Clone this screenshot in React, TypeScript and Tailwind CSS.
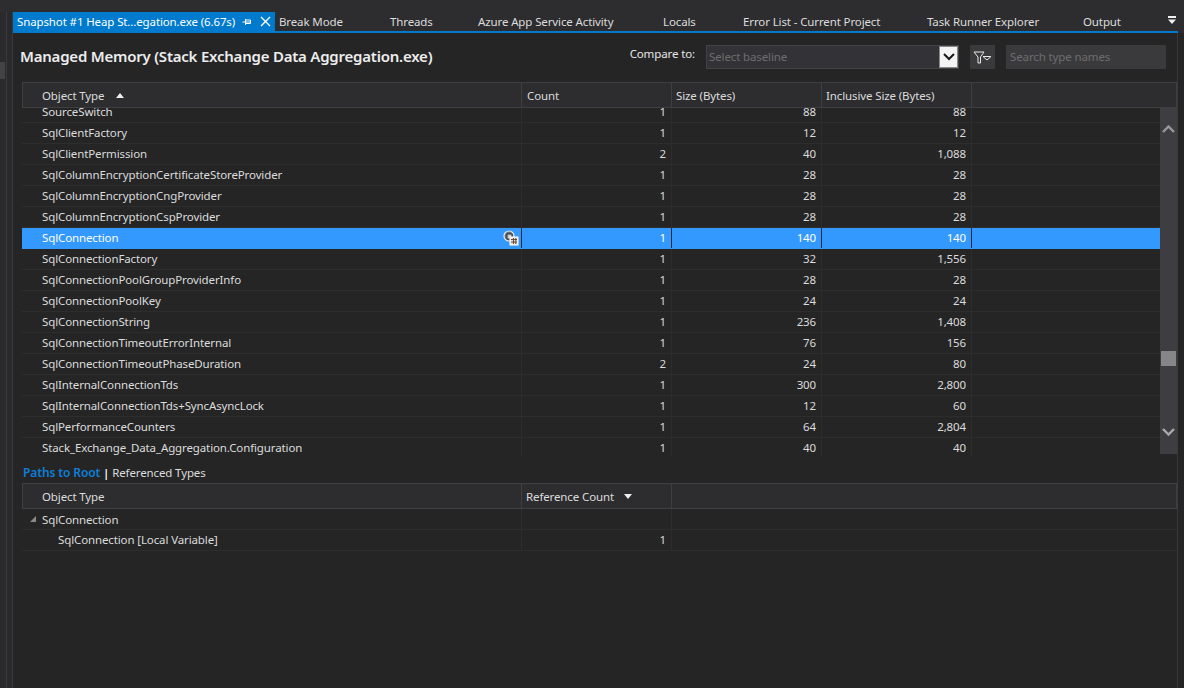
import React from "react";

const rows: [string, string, string, string][] = [
  ["SourceSwitch", "1", "88", "88"],
  ["SqlClientFactory", "1", "12", "12"],
  ["SqlClientPermission", "2", "40", "1,088"],
  ["SqlColumnEncryptionCertificateStoreProvider", "1", "28", "28"],
  ["SqlColumnEncryptionCngProvider", "1", "28", "28"],
  ["SqlColumnEncryptionCspProvider", "1", "28", "28"],
  ["SqlConnection", "1", "140", "140"],
  ["SqlConnectionFactory", "1", "32", "1,556"],
  ["SqlConnectionPoolGroupProviderInfo", "1", "28", "28"],
  ["SqlConnectionPoolKey", "1", "24", "24"],
  ["SqlConnectionString", "1", "236", "1,408"],
  ["SqlConnectionTimeoutErrorInternal", "1", "76", "156"],
  ["SqlConnectionTimeoutPhaseDuration", "2", "24", "80"],
  ["SqlInternalConnectionTds", "1", "300", "2,800"],
  ["SqlInternalConnectionTds+SyncAsyncLock", "1", "12", "60"],
  ["SqlPerformanceCounters", "1", "64", "2,804"],
  ["Stack_Exchange_Data_Aggregation.Configuration", "1", "40", "40"],
];

const tabs = [
  ["Break Mode", "w-[110px] pl-[4px]"],
  ["Threads", "w-[93px] pl-[5px]"],
  ["Azure App Service Activity", "w-[185px]"],
  ["Locals", "w-[80px]"],
  ["Error List - Current Project", "w-[184px]"],
  ["Task Runner Explorer", "w-[156px]"],
  ["Output", "w-[84px]"],
];

function ObjectIcon() {
  return (
    <svg width="16" height="16" viewBox="0 0 16 16" className="absolute right-[2px] top-[2px]">
      <circle cx="6" cy="6" r="5" fill="#5a6d80" stroke="#e8e8e8" strokeWidth="1.2" />
      <rect x="4" y="4" width="5" height="5" fill="#cfcfcf" stroke="#333" />
      <rect x="7" y="7" width="8" height="8" fill="#e6e2de" stroke="#fff" />
      <path d="M8 9.5h6M8 12h6M10.5 8v6M12.8 8v6" stroke="#6b4a3a" strokeWidth="1" />
    </svg>
  );
}

function Row({ row }: { row: [string, string, string, string] }) {
  const selected = row[0] === "SqlConnection";
  const line = selected ? "border-[#1f2a36]" : "border-[#2d2d2e]";
  return (
    <div
      className={`flex h-[21px] leading-[20px] border-b ${
        selected ? "bg-[#3399ff] text-white border-[#3399ff]" : "border-[#2d2d2e] text-[#dcdcdc]"
      }`}
    >
      <div className={`relative w-[500px] pl-[20px] border-r whitespace-nowrap ${line}`}>
        {row[0]}
        {selected && <ObjectIcon />}
      </div>
      <div className={`w-[150px] pr-[5px] text-right border-r ${line}`}>{row[1]}</div>
      <div className={`w-[150px] pr-[5px] text-right border-r ${line}`}>{row[2]}</div>
      <div className={`w-[150px] pr-[5px] text-right border-r ${line}`}>{row[3]}</div>
      <div className="flex-1" />
    </div>
  );
}

export default function App() {
  return (
    <div className="h-[688px] w-[1184px] overflow-hidden bg-[#252526] text-[11.5px] text-[#dcdcdc] font-['Noto_Sans',sans-serif] tracking-[-0.12px]">
      <div className="h-[12px] bg-[#2d2d30]" />
      <div className="flex h-[676px]">
        {/* left dock strip */}
        <div className="w-[13px] shrink-0 border-r border-[#3a3a3c] bg-[#2a2a2c]">
          <div className="h-full w-[7px] border-r border-[#3a3a3c] pt-[50px]">
            <div className="h-[17px] w-[5px] bg-[#434346]" />
          </div>
        </div>
        <div className="flex-1 min-w-0 flex flex-col">
          {/* tab well */}
          <div className="bg-[#2d2d30]">
            <div className="mr-[6px] flex h-[21px] border-b-2 border-[#007acc]">
              <div className="flex w-[262px] shrink-0 items-center bg-[#007acc] pl-[4px] text-white whitespace-nowrap">
                <span className="w-[225px]">Snapshot #1 Heap St...egation.exe (6.67s)</span>
                <svg width="10" height="10" viewBox="0 0 10 10">
                  <path d="M0.5 5h3M3.5 2v6M3.5 3h5v3.5h-5M3.5 5h5" stroke="#fff" fill="none" />
                </svg>
                <svg width="11" height="11" viewBox="0 0 11 11" className="ml-[8px]">
                  <path d="M1 1l9 9M10 1l-9 9" stroke="#fff" strokeWidth="1.4" />
                </svg>
              </div>
              {tabs.map(([t, w]) => (
                <div key={t} className={`${w} shrink-0 whitespace-nowrap leading-[20px]`}>
                  {t}
                </div>
              ))}
              <div className="flex items-start pt-[4px]">
                <svg width="10" height="9" viewBox="0 0 10 9">
                  <path d="M1 0h8v2H1zM1 3.5h8L5 8z" fill="#eee" />
                </svg>
              </div>
            </div>
          </div>
          <div className="flex-1 min-h-0 mr-[6px] border-r border-[#3a3a3c] flex flex-col pl-[9px]">
            {/* title row */}
            <div className="flex h-[49px] shrink-0 items-center pb-[1px]">
              <h1 className="ml-[-2px] mb-[1px] text-[15px] font-semibold text-[#ededed] tracking-[-0.22px] whitespace-nowrap">
                Managed Memory (Stack Exchange Data Aggregation.exe)
              </h1>
              <span className="ml-auto mr-[11px] mb-[6px] text-[#e6e6e6]">Compare to:</span>
              <div className="flex h-[24px] w-[253px] items-center justify-between bg-[#333337] border border-[#434346] pl-[2px] text-[#6d6d6d]">
                <span>Select baseline</span>
                <span className="flex h-[22px] w-[19px] items-center justify-center bg-[#f4f4f4] border border-[#888]">
                  <svg width="12" height="8" viewBox="0 0 12 8">
                    <path d="M1 1l5 5 5-5" stroke="#1a1a1a" strokeWidth="2" fill="none" />
                  </svg>
                </span>
              </div>
              <div className="ml-[11px] flex h-[24px] w-[25px] items-center justify-center bg-[#3a3a3d]">
                <svg width="20" height="13" viewBox="0 0 20 13">
                  <path d="M1 1h10L7.5 6v6H5V6zM10 5.5h8l-4 3.5z" stroke="#e8e8e8" fill="none" />
                </svg>
              </div>
              <div className="ml-[11px] mr-[11px] flex h-[24px] w-[160px] items-center bg-[#3a3a3d] pl-[4px] text-[#6d6d6d]">
                Search type names
              </div>
            </div>
            {/* main grid */}
            <div className="h-[374px] shrink-0 flex flex-col">
              <div className="flex h-[26px] shrink-0 leading-[25px] bg-[#2d2d30] border border-[#3f3f41]">
                <div className="flex w-[499px] items-center pl-[19px] border-r border-[#3f3f41]">
                  Object Type
                  <svg width="8" height="5" viewBox="0 0 8 5" className="ml-[12px]">
                    <path d="M0 5l4-5 4 5z" fill="#eee" />
                  </svg>
                </div>
                <div className="w-[150px] pl-[5px] border-r border-[#3f3f41]">Count</div>
                <div className="w-[150px] pl-[4px] border-r border-[#3f3f41]">Size (Bytes)</div>
                <div className="w-[150px] pl-[4px] border-r border-[#3f3f41]">Inclusive Size (Bytes)</div>
                <div className="flex-1" />
              </div>
              <div className="flex flex-1 min-h-0">
                <div className="flex-1 min-w-0 overflow-hidden">
                  <div className="-mt-[6px]">
                    {rows.map((r) => (
                      <Row key={r[0]} row={r} />
                    ))}
                  </div>
                </div>
                <div className="flex h-[346px] w-[17px] shrink-0 flex-col items-center bg-[#3e3e42]">
                  <svg width="13" height="9" viewBox="0 0 13 9" className="mt-[17px]">
                    <path d="M1 7l5.5-5.5L12 7" stroke="#999" strokeWidth="2.4" fill="none" />
                  </svg>
                  <div className="mt-[217px] h-[15px] w-[15px] bg-[#868688]" />
                  <svg width="13" height="9" viewBox="0 0 13 9" className="mt-[61px]">
                    <path d="M1 2l5.5 5.5L12 2" stroke="#aaa" strokeWidth="2.4" fill="none" />
                  </svg>
                </div>
              </div>
            </div>
            {/* lower grid */}
            <div className="h-[27px] shrink-0 pt-[8px] pl-[1px] leading-[18px] whitespace-nowrap">
              <span className="text-[12px] font-semibold text-[#0e7fd6]">Paths to Root</span>
              <span className="font-semibold text-white"> | </span>
              <span>Referenced Types</span>
            </div>
            <div className="flex h-[26px] shrink-0 leading-[25px] bg-[#2d2d30] border border-[#3f3f41]">
              <div className="w-[499px] pl-[19px] border-r border-[#3f3f41]">Object Type</div>
              <div className="flex w-[150px] items-center pl-[4px] border-r border-[#3f3f41]">
                Reference Count
                <svg width="8" height="5" viewBox="0 0 8 5" className="ml-[10px]">
                  <path d="M0 0l4 5 4-5z" fill="#eee" />
                </svg>
              </div>
              <div className="flex-1" />
            </div>
            <div className="flex h-[21px] leading-[19px] border-b border-[#2d2d2e]">
              <div className="flex w-[500px] items-center border-r border-[#2d2d2e] pl-[7px]">
                <svg width="8" height="8" viewBox="0 0 8 8" className="mr-[5px]">
                  <path d="M7 1v6H1z" fill="#8a8a8a" />
                </svg>
                SqlConnection
              </div>
              <div className="w-[150px] border-r border-[#2d2d2e]" />
            </div>
            <div className="flex h-[21px] leading-[20px] border-b border-[#2d2d2e]">
              <div className="w-[500px] pl-[36px] border-r border-[#2d2d2e]">SqlConnection [Local Variable]</div>
              <div className="w-[150px] pr-[5px] text-right border-r border-[#2d2d2e]">1</div>
            </div>
          </div>
        </div>
      </div>
    </div>
  );
}
